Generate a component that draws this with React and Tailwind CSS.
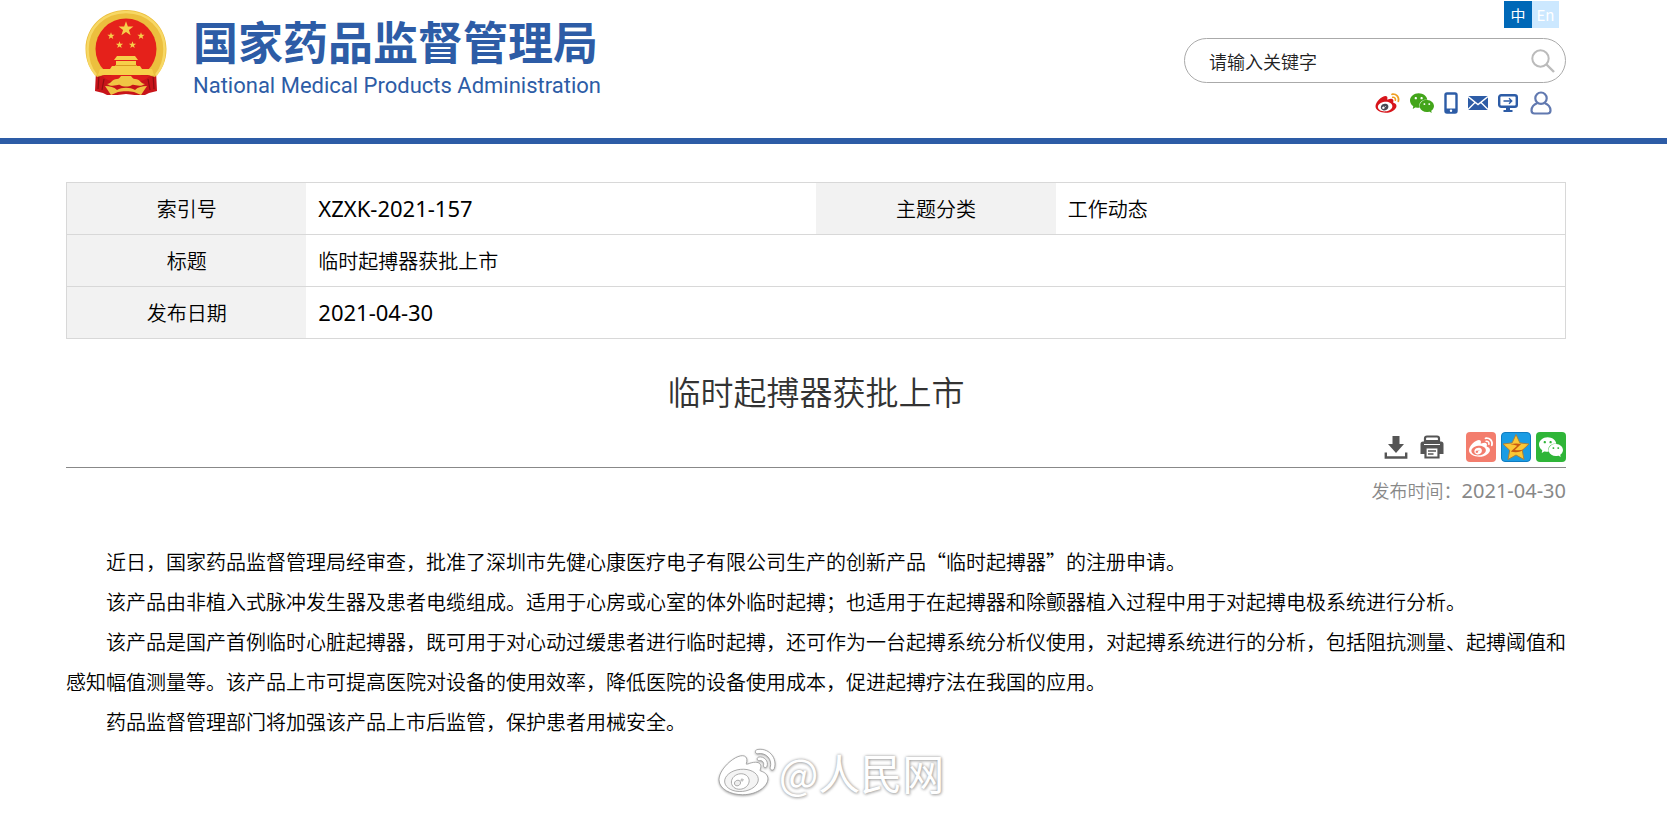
import { SiWechat } from "react-icons/si";

const CJK = "font-['Noto_Sans_CJK_SC',sans-serif]";

const WEIBO_BODY =
  "M18.059 11.649c-.346-.105-.57-.18-.405-.615.375-.977.42-1.804 0-2.404-.781-1.112-2.915-1.053-5.364-.03 0 0-.766.331-.571-.271.376-1.217.315-2.224-.27-2.809-1.338-1.337-4.869.045-7.888 3.08C1.309 10.87 0 13.273 0 15.348c0 3.981 5.099 6.395 10.086 6.395 6.536 0 10.888-3.801 10.888-6.82 0-1.822-1.547-2.854-2.915-3.274z";
const WEIBO_FACE =
  "M10.098 20.323c-3.977.391-7.414-1.406-7.672-4.02-.259-2.609 2.759-5.047 6.74-5.441 3.979-.394 7.413 1.404 7.671 4.018.259 2.6-2.759 5.049-6.739 5.443z";
const WEIBO_IRIS =
  "M10.496 12.873c-1.893-.493-4.033.45-4.857 2.118-.836 1.704-.026 3.591 1.886 4.21 1.983.64 4.318-.341 5.132-2.179.8-1.793-.201-3.642-2.161-4.149z";
const WEIBO_PUPIL =
  "M9.05 17.219c-.384.616-1.208.884-1.829.602-.612-.279-.793-.991-.406-1.593.379-.595 1.176-.861 1.793-.601.622.263.82.972.442 1.592zM10.32 15.592c-.141.237-.449.353-.689.253-.236-.09-.313-.361-.177-.586.138-.227.436-.346.672-.24.239.09.33.332.194.573z";
const WEIBO_WAVES =
  "M19.967 6.557c-.766-.856-1.908-1.187-2.96-.962-.436.09-.706.511-.616.932.09.42.511.691.932.602.511-.105 1.067.044 1.442.465.376.421.466.977.316 1.473-.136.406.089.856.51.992.405.119.857-.105.992-.512.33-1.021.15-2.133-.616-2.99zM22.385 4.362c-1.576-1.757-3.905-2.419-6.054-1.968-.496.104-.812.587-.706 1.081.104.496.586.813 1.082.707 1.532-.331 3.185.15 4.296 1.383 1.112 1.246 1.429 2.943.947 4.416-.165.48.106 1.007.586 1.157.479.165.991-.104 1.157-.586.675-2.088.271-4.433-1.308-6.19z";

function Weibo({ body, face, iris, pupil, waves, outline, className }) {
  return (
    <svg
      viewBox="0 1 24 22"
      className={className}
      stroke={outline ?? "none"}
      strokeWidth="0.35"
      overflow="visible"
      aria-hidden="true"
    >
      <path d={WEIBO_BODY} fill={body} />
      <path d={WEIBO_FACE} fill={face} />
      <path d={WEIBO_IRIS} fill={iris} />
      <path d={WEIBO_PUPIL} fill={pupil} />
      <path d={WEIBO_WAVES} fill={waves} />
    </svg>
  );
}

function Emblem() {
  const star = "M0-10 2.4-3.1 9.5-3.1 3.8 1.2 5.9 8.1 0 4-5.9 8.1-3.8 1.2-9.5-3.1-2.4-3.1z";
  return (
    <svg viewBox="0 0 82 86" className="h-[86px] w-[82px]" role="img" aria-label="国徽">
      <path d="M11 62 10 82l8 2 6 3 17-2 17 2 6-3 8-2-1-20z" fill="#c8141a" />
      <path d="M14 66l-1 14M19 70l-2 11M68 66l1 14M63 70l2 11" stroke="#8f0d12" strokeWidth="1.2" />
      <path d="M41 1C18 1 .5 18 .5 40c0 12 4.5 21 11.5 28 8-3 18-4 29-1 11-3 21-2 29 1 7-7 11.5-16 11.5-28C81.5 18 64 1 41 1z" fill="#ecbf3e" />
      <path d="M11 66C5 59 2.5 50 2.5 40 2.5 19 19 3 41 3s38.500 16 38.500 37c0 10-2.500 19-8.500 26" fill="none" stroke="#f7d865" strokeWidth="2.5" />
      <circle cx="41" cy="40" r="30.5" fill="#e5211b" />
      <g fill="#f6cf4a">
        <path d={star} transform="translate(41 20) scale(.78)" />
        <path d={star} transform="translate(26 27) scale(.38)" />
        <path d={star} transform="translate(56 27) scale(.38)" />
        <path d={star} transform="translate(34.5 36) scale(.38)" />
        <path d={star} transform="translate(47.5 36) scale(.38)" />
        <path d="M32 47h18l3 4H29zM31 52h20v4H31zM27 57h28l2 3H25zM15 60h52l2 6H13z" />
      </g>
      <path d="M30 56.5h22" stroke="#d8991f" strokeWidth="1" />
      <path d="M17 66.5h48c-4 4-8 6-12 6l-12 2-12-2c-4 0-8-2-12-6z" fill="#dc1c1b" />
      <path d="M22 75c4 0 5-5 10-5 2 0 3-2 4-3h10c1 1 2 3 4 3 5 0 6 5 10 5-6 4-10 0-13 1-3 2-9 2-12 0-3-1-7 3-13-1z" fill="#f0c544" />
      <path d="M20 77c5 0 9 1 12 4 5-3 13-3 18 0 3-3 7-4 12-4l-6 9-7-3c-4-1-12-1-16 0l-7 3z" fill="#efc244" />
    </svg>
  );
}

function QzoneStar() {
  return (
    <svg viewBox="0 0 30 30" className="h-[30px] w-[30px]" aria-hidden="true">
      <rect x=".5" y=".5" width="29" height="29" rx="3.5" fill="#1a9ce4" stroke="#0f7cc0" />
      <path d="M15 2.5 18.900 10.900 28 12 21.300 18.300 23 27.500 15 23 7 27.500 8.700 18.300 2 12 11.100 10.900z" fill="#fbc736" stroke="#a8813a" strokeWidth="1" strokeLinejoin="round" />
      <path d="M9.500 12.300c3.600-.9 7.200-.9 10.700-.2l-6.400 5.800c3 .7 6 .5 9.200-.6-3.400 3-8.300 3.500-13.200 2.200l6.400-5.800c-2.200-.7-4.300-1.100-6.700-1.400z" fill="#c85a12" />
    </svg>
  );
}

function HeaderIcons() {
  return (
    <nav aria-label="快捷入口" className="mt-2 flex h-6 items-center pr-3.5">
      <a href="#weibo" aria-label="微博">
        <Weibo className="h-[22px] w-[25px]" body="#d7151b" face="#fff" iris="#4a4a55" pupil="#fff" waves="#f0a024" />
      </a>
      <a href="#wechat" aria-label="微信" className="ml-2.5">
        <SiWechat className="h-6 w-6 text-[#43a51a]" />
      </a>
      <a href="#mobile" aria-label="手机版" className="ml-2.5">
        <svg viewBox="0 0 14 22" className="h-[22px] w-3.5" aria-hidden="true">
          <rect x="1.5" y="1.5" width="11" height="19" rx="1.5" fill="#fff" stroke="#2d5ca6" strokeWidth="2.4" />
          <path d="M2 16.500h10v4H2z" fill="#2d5ca6" />
          <circle cx="7" cy="18.7" r="1.2" fill="#fff" />
        </svg>
      </a>
      <a href="#mail" aria-label="邮箱" className="ml-2.5">
        <svg viewBox="0 0 20 14" className="h-3.5 w-5" aria-hidden="true">
          <path d="M0 0h20v14H0z" fill="#2d5ca6" />
          <path d="M0 .5 10 8.500 20 .5M0 13.500 7 6.500M20 13.500 13 6.500" fill="none" stroke="#fff" strokeWidth="1.4" />
        </svg>
      </a>
      <a href="#desktop" aria-label="电脑版" className="ml-2.5">
        <svg viewBox="0 0 20 18" className="h-[18px] w-5" aria-hidden="true">
          <rect x="1.2" y="1.2" width="17.6" height="11.6" rx="2" fill="#fff" stroke="#2d5ca6" strokeWidth="2.4" />
          <path d="M8 13h4v3h2.500v2h-9v-2H8z" fill="#2d5ca6" />
          <path d="M5.500 7h8M11 4.200 13.800 7 11 9.800" fill="none" stroke="#2d5ca6" strokeWidth="1.3" />
        </svg>
      </a>
      <a href="#user" aria-label="用户" className="ml-3">
        <svg viewBox="0 0 22 24" className="h-6 w-[22px]" fill="none" stroke="#6179b0" strokeWidth="2.2" aria-hidden="true">
          <circle cx="11" cy="7.2" r="5.7" />
          <path d="M7.500 12C3.500 13.500 1.500 16.500 1.500 19.500c0 2 1 3 3 3h13c2 0 3-1 3-3 0-3-2-6-6-7.500" />
        </svg>
      </a>
    </nav>
  );
}

function Header() {
  return (
    <header className="flex h-36 items-start justify-between border-b-[6px] border-[#2d5ca6] pr-[101px] pl-[85px]">
      <a href="#home" className="flex items-start pt-[9px]">
        <Emblem />
        <div className="ml-[26px] text-[#2d5ca6]">
          <h1 className="pt-1 text-[45px] leading-[56px] font-bold whitespace-nowrap">国家药品监督管理局</h1>
          <p className="font-['Roboto',sans-serif] text-[22px] leading-[34px] whitespace-nowrap">
            National Medical Products Administration
          </p>
        </div>
      </a>
      <div className="flex flex-col items-end">
        <div className="mt-px mr-[7px] flex text-[15px] leading-[27px] text-white">
          <a href="#zh" className="w-7 bg-[#0068b7] text-center">中</a>
          <a href="#en" className="w-[27px] bg-[#cce8ff] text-center">En</a>
        </div>
        <form className="mt-2.5 flex h-[45px] w-[382px] items-center rounded-full border border-[#aaa] pr-2.5 pl-6">
          <input
            type="text"
            aria-label="关键字"
            placeholder="请输入关键字"
            className="min-w-0 flex-1 bg-transparent text-lg font-[350] text-[#222] outline-none placeholder:text-[#222]"
          />
          <button type="button" aria-label="搜索">
            <svg viewBox="0 0 24 24" className="h-6 w-6" fill="none" stroke="#bbb" strokeWidth="2" aria-hidden="true">
              <circle cx="9.5" cy="9.5" r="8.2" />
              <path d="m15.500 15.500 7.500 7.500" strokeWidth="2.4" />
            </svg>
          </button>
        </form>
        <HeaderIcons />
      </div>
    </header>
  );
}

function InfoTable() {
  const row = "h-[52px] border-b border-[#d8d8d8]";
  const label = "w-[16%] bg-[#f2f2f2] text-center font-[350]";
  const value = "pl-3 font-[350]";
  const latin = "pl-3 font-['Noto_Sans',sans-serif] text-[22px]";
  return (
    <table className="w-full table-fixed border-collapse border border-[#d8d8d8] text-xl text-black">
      <tbody>
        <tr className={row}>
          <th scope="row" className={label}>索引号</th>
          <td className={latin}>XZXK-2021-157</td>
          <th scope="row" className={label}>主题分类</th>
          <td className={value}>工作动态</td>
        </tr>
        <tr className={row}>
          <th scope="row" className={label}>标题</th>
          <td colSpan={3} className={value}>临时起搏器获批上市</td>
        </tr>
        <tr className={row}>
          <th scope="row" className={label}>发布日期</th>
          <td colSpan={3} className={latin}>2021-04-30</td>
        </tr>
      </tbody>
    </table>
  );
}

function Tools() {
  return (
    <div className="flex items-center justify-end border-b border-[#888] pb-[5px]">
      <button type="button" aria-label="下载">
        <svg viewBox="0 0 24 24" className="h-6 w-6" aria-hidden="true">
          <path d="M8.500 1h7v8h4.500l-8 9-8-9h4.500z" fill="#555" />
          <path d="M1.800 17.500v5h20.400v-5" fill="none" stroke="#555" strokeWidth="2.4" />
        </svg>
      </button>
      <button type="button" aria-label="打印" className="ml-3">
        <svg viewBox="0 0 24 24" className="h-6 w-6" aria-hidden="true">
          <path d="M5 6V3.500a2 2 0 0 1 2-2h10a2 2 0 0 1 2 2V6z" fill="#fff" stroke="#555" strokeWidth="2.2" />
          <path d="M3 6.500h18A2.500 2.500 0 0 1 23.500 9v10H.5V9A2.500 2.500 0 0 1 3 6.500z" fill="#555" />
          <path d="M5.500 12.500h13v10h-13z" fill="#fff" stroke="#555" strokeWidth="2.2" />
          <path d="M8 16h8M8 19h5.500" stroke="#555" strokeWidth="1.6" />
          <path d="M4 9.500h16" stroke="#fff" strokeWidth="1" />
        </svg>
      </button>
      <div className="ml-[22px] flex gap-[5px]">
        <a href="#share-weibo" aria-label="分享到微博" className="flex h-[30px] w-[30px] items-center justify-center rounded bg-[#f37d6d]">
          <Weibo className="h-[22px] w-6" body="#fff" face="#f37d6d" iris="#fff" pupil="#f37d6d" waves="#fff" />
        </a>
        <a href="#share-qzone" aria-label="分享到QQ空间" className="h-[30px] w-[30px]">
          <QzoneStar />
        </a>
        <a href="#share-wechat" aria-label="分享到微信" className="flex h-[30px] w-[30px] items-center justify-center rounded bg-[#2fb538]">
          <SiWechat className="h-6 w-6 text-white" />
        </a>
      </div>
    </div>
  );
}

const PARAGRAPHS = [
  "近日，国家药品监督管理局经审查，批准了深圳市先健心康医疗电子有限公司生产的创新产品“临时起搏器”的注册申请。",
  "该产品由非植入式脉冲发生器及患者电缆组成。适用于心房或心室的体外临时起搏；也适用于在起搏器和除颤器植入过程中用于对起搏电极系统进行分析。",
  "该产品是国产首例临时心脏起搏器，既可用于对心动过缓患者进行临时起搏，还可作为一台起搏系统分析仪使用，对起搏系统进行的分析，包括阻抗测量、起搏阈值和感知幅值测量等。该产品上市可提高医院对设备的使用效率，降低医院的设备使用成本，促进起搏疗法在我国的应用。",
  "药品监督管理部门将加强该产品上市后监管，保护患者用械安全。",
];

export default function App() {
  return (
    <div lang="zh-CN" className={`min-h-screen bg-white ${CJK}`}>
      <Header />
      <main className="pt-[38px] pr-[101px] pl-[66px]">
        <InfoTable />
        <h2 className="mt-[27px] text-center text-[33px] leading-[50px] font-[350] text-[#333]">临时起搏器获批上市</h2>
        <div className="mt-4">
          <Tools />
        </div>
        <p className="mt-1.5 text-right text-lg leading-8 font-[350] text-[#888]">
          发布时间：<span className="font-['Noto_Sans',sans-serif] text-xl font-normal">2021-04-30</span>
        </p>
        <article className="mt-9 text-justify indent-[2em] text-xl leading-10 font-[350] text-black">
          {PARAGRAPHS.map((text) => (
            <p key={text}>{text}</p>
          ))}
        </article>
      </main>
      <footer className="flex items-center justify-center gap-1 pr-1">
        <Weibo
          className="h-[52px] w-14 drop-shadow-[0_1px_1px_#aaa]"
          body="#fff"
          face="#f4f4f4"
          iris="#fff"
          pupil="#eee"
          waves="#fff"
          outline="#999"
        />
        <span className="text-[42px] leading-[60px] text-white [text-shadow:0_0_3px_#999,1px_1px_3px_#bbb]">@人民网</span>
      </footer>
    </div>
  );
}
